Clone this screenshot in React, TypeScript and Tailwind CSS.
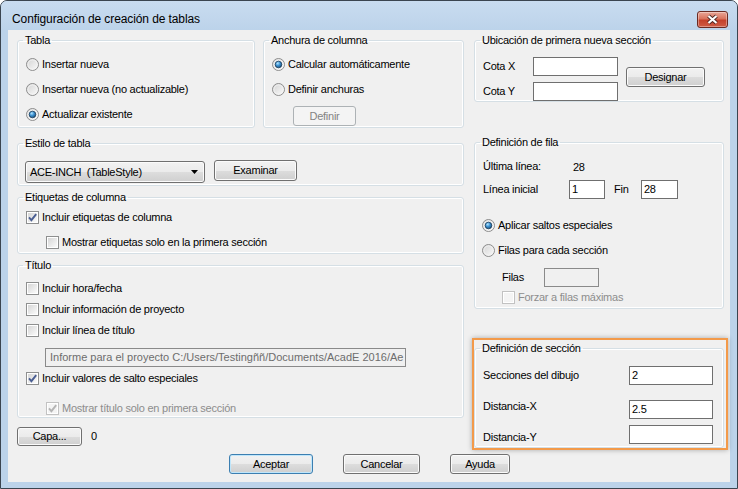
import React from "react";

type Kids = { children?: React.ReactNode; className?: string };

const GroupBox = ({ title, className = "", children }: Kids & { title: string }) => (
  <fieldset
    className={`rounded-[3px] border border-[#d5dfe5] shadow-[inset_0_0_0_1px_#ffffff] ${className}`}
  >
    <legend className="ml-[5px] px-[2px] leading-[13px]">{title}</legend>
    {children}
  </fieldset>
);

const RadioIcon = ({ checked }: { checked?: boolean }) => (
  <svg width="13" height="13" viewBox="0 0 13 13" className="shrink-0">
    <defs>
      <linearGradient id="rbg" x1="0" y1="0" x2="1" y2="1">
        <stop offset="0" stopColor="#d2d2d2" />
        <stop offset="1" stopColor="#fcfcfc" />
      </linearGradient>
      <radialGradient id="rdot" cx="0.38" cy="0.32" r="0.75">
        <stop offset="0" stopColor="#b4e6ff" />
        <stop offset="0.45" stopColor="#3f94d4" />
        <stop offset="1" stopColor="#17496f" />
      </radialGradient>
    </defs>
    <circle cx="6.5" cy="6.5" r="6" fill="url(#rbg)" stroke="#8d8d8d" />
    <circle cx="6.5" cy="6.5" r="4.6" fill="none" stroke="#f4f4f4" strokeWidth="0.8" />
    {checked && <circle cx="6.5" cy="6.5" r="3.3" fill="url(#rdot)" stroke="#1b3c5c" strokeWidth="0.8" />}
  </svg>
);

const CheckIcon = ({ checked, disabled }: { checked?: boolean; disabled?: boolean }) => (
  <svg width="13" height="13" viewBox="0 0 13 13" className="shrink-0">
    <defs>
      <linearGradient id="cbg" x1="0" y1="0" x2="1" y2="1">
        <stop offset="0" stopColor="#d6d6d6" />
        <stop offset="1" stopColor="#fbfbfb" />
      </linearGradient>
    </defs>
    <rect x="0.5" y="0.5" width="12" height="12" fill="#fff" stroke={disabled ? "#c2c2c2" : "#8e8f8f"} />
    <rect x="2" y="2" width="9" height="9" fill={disabled ? "#f4f4f4" : "url(#cbg)"} />
    {checked && (
      <path
        d="M3 6.4 L5.4 9.2 L10.2 3.2"
        fill="none"
        stroke={disabled ? "#b4b4b4" : "#4a5e92"}
        strokeWidth="1.9"
      />
    )}
  </svg>
);

const Radio = ({ label, checked, className = "" }: { label: string; checked?: boolean; className?: string }) => (
  <div className={`flex h-[13px] items-center gap-[3px] ${className}`}>
    <RadioIcon checked={checked} />
    <span className="leading-[13px]">{label}</span>
  </div>
);

const Check = ({
  label,
  checked,
  disabled,
  className = "",
}: {
  label: string;
  checked?: boolean;
  disabled?: boolean;
  className?: string;
}) => (
  <div className={`flex h-[13px] items-center gap-[3px] ${className}`}>
    <CheckIcon checked={checked} disabled={disabled} />
    <span className={`leading-[13px] ${disabled ? "text-[#8d8d8d]" : ""}`}>{label}</span>
  </div>
);

const Btn = ({
  children,
  className = "",
  def,
  disabled,
}: Kids & { def?: boolean; disabled?: boolean }) => (
  <button
    className={`flex items-center justify-center rounded-[3px] border leading-[13px] ${
      disabled
        ? "border-[#adb2b5] bg-[#f4f4f4] text-[#838383]"
        : def
        ? "border-[#3c7fb1] bg-[linear-gradient(#f2f2f2_0%,#ebebeb_50%,#dddddd_50%,#cfcfcf_100%)] shadow-[inset_0_0_0_1px_#bfe6fb]"
        : "border-[#707070] bg-[linear-gradient(#f2f2f2_0%,#ebebeb_50%,#dddddd_50%,#cfcfcf_100%)] shadow-[inset_0_0_0_1px_#fbfbfb]"
    } ${className}`}
  >
    {children}
  </button>
);

const Field = ({ value, className = "", disabled }: { value?: string; className?: string; disabled?: boolean }) => (
  <div
    className={`h-[19px] shrink-0 overflow-hidden whitespace-nowrap border pl-[2px] leading-[17px] ${
      disabled ? "border-[#8a8a8a] bg-[#f0f0f0] text-[#6d6d6d]" : "border-[#6f6f6f] bg-white"
    } ${className}`}
  >
    {value}
  </div>
);

const CloseButton = () => (
  <div className="flex h-[17px] w-[31px] items-center justify-center rounded-[3px] border border-[#6a2a22] bg-[linear-gradient(#e9a798_0%,#d9735d_45%,#c4412b_55%,#cf5c45_100%)] shadow-[inset_0_0_0_1px_rgba(255,255,255,0.35)]">
    <svg width="13" height="11" viewBox="0 0 13 11">
      <path d="M2.5 2 L10.5 9 M10.5 2 L2.5 9" stroke="#4b2420" strokeWidth="3.8" />
      <path d="M2.5 2 L10.5 9 M10.5 2 L2.5 9" stroke="#ffffff" strokeWidth="2.2" />
    </svg>
  </div>
);

export default function App() {
  return (
    <div className="h-[489px] w-[738px] font-['Liberation_Sans',Arial,sans-serif] text-[11px] tracking-[-0.25px] text-black">
      <div className="flex h-full flex-col rounded-t-[7px] border border-[#3b4550] bg-[#bcd3ea]">
        {/* title bar */}
        <div className="flex h-[29px] shrink-0 items-center justify-between rounded-t-[6px] bg-[linear-gradient(#c9dcf0,#bcd3ea)] pl-[11px] pr-[9px] pt-[7px]">
          <span className="text-[12px] leading-[15px] tracking-[-0.1px]">Configuración de creación de tablas</span>
          <CloseButton />
        </div>

        {/* client area */}
        <div className="mx-[7px] mb-[6px] flex-1 bg-[#f0f0f0] pl-[9px] pt-[4px]">
          <div className="flex gap-[10px]">
            {/* left column */}
            <div className="flex w-[447px] flex-col">
              <div className="flex gap-[8px]">
                <GroupBox title="Tabla" className="h-[94px] w-[238px]">
                  <div className="flex flex-col gap-[12px] pl-[8px] pt-[11px]">
                    <Radio label="Insertar nueva" />
                    <Radio label="Insertar nueva (no actualizable)" />
                    <Radio label="Actualizar existente" checked />
                  </div>
                </GroupBox>
                <GroupBox title="Anchura de columna" className="h-[94px] w-[201px]">
                  <div className="flex flex-col pl-[8px] pt-[11px]">
                    <Radio label="Calcular automáticamente" checked />
                    <Radio label="Definir anchuras" className="mt-[12px]" />
                    <Btn disabled className="ml-[21px] mt-[10px] h-[20px] w-[63px]">
                      Definir
                    </Btn>
                  </div>
                </GroupBox>
              </div>

              <GroupBox title="Estilo de tabla" className="mt-[9px] h-[49px]">
                <div className="flex items-start gap-[9px] pl-[7px] pt-[10px]">
                  <div className="mt-[1px] flex h-[22px] w-[180px] items-center justify-between rounded-[3px] border border-[#707070] bg-[linear-gradient(#f2f2f2_0%,#ebebeb_50%,#dddddd_50%,#cfcfcf_100%)] pl-[4px] pr-[5px] shadow-[inset_0_0_0_1px_#fbfbfb]">
                    <span className="whitespace-pre">{"ACE-INCH  (TableStyle)"}</span>
                    <svg width="8" height="5" viewBox="0 0 8 5">
                      <path d="M0 0 H7 L3.5 4 Z" fill="#000" />
                    </svg>
                  </div>
                  <Btn className="h-[21px] w-[83px]">Examinar</Btn>
                </div>
              </GroupBox>

              <GroupBox title="Etiquetas de columna" className="mt-[5px] h-[63px]">
                <div className="flex flex-col pl-[8px] pt-[7px]">
                  <Check label="Incluir etiquetas de columna" checked />
                  <Check label="Mostrar etiquetas solo en la primera sección" className="ml-[20px] mt-[12px]" />
                </div>
              </GroupBox>

              <GroupBox title="Título" className="mt-[5px] h-[159px]">
                <div className="flex flex-col pl-[8px] pt-[10px]">
                  <Check label="Incluir hora/fecha" />
                  <Check label="Incluir información de proyecto" className="mt-[8px]" />
                  <Check label="Incluir línea de título" className="mt-[8px]" />
                  <Field
                    disabled
                    value="Informe para el proyecto C:/Users/Testingññ/Documents/AcadE 2016/Ae"
                    className="ml-[19px] mt-[11px] h-[17px] w-[361px] pl-[4px] leading-[15px] tracking-[0px]"
                  />
                  <Check label="Incluir valores de salto especiales" checked className="mt-[5px]" />
                  <Check label="Mostrar título solo en primera sección" checked disabled className="ml-[20px] mt-[17px]" />
                </div>
              </GroupBox>

              <div className="mt-[9px] flex h-[19px] items-center">
                <Btn className="h-[19px] w-[65px]">Capa...</Btn>
                <span className="ml-[9px]">0</span>
              </div>
            </div>

            {/* right column */}
            <div className="flex w-[250px] flex-col">
              <GroupBox title="Ubicación de primera nueva sección" className="h-[68px]">
                <div className="flex items-start pl-[8px] pt-[10px]">
                  <div className="flex flex-col gap-[6px]">
                    <div className="flex items-center">
                      <span className="w-[50px]">Cota X</span>
                      <Field className="w-[85px]" />
                    </div>
                    <div className="flex items-center">
                      <span className="w-[50px]">Cota Y</span>
                      <Field className="w-[85px]" />
                    </div>
                  </div>
                  <Btn className="ml-[8px] mt-[10px] h-[20px] w-[79px]">Designar</Btn>
                </div>
              </GroupBox>

              <GroupBox title="Definición de fila" className="mt-[34px] h-[173px]">
                <div className="flex flex-col pl-[7px] pt-[11px]">
                  <div className="flex h-[13px] items-center pl-[1px]">
                    <span className="w-[90px]">Última línea:</span>
                    <span className="mt-[2px]">28</span>
                  </div>
                  <div className="mt-[7px] flex items-center pl-[1px]">
                    <span className="w-[86px]">Línea inicial</span>
                    <Field value="1" className="w-[36px]" />
                    <span className="ml-[9px] w-[27px]">Fin</span>
                    <Field value="28" className="w-[37px]" />
                  </div>
                  <Radio label="Aplicar saltos especiales" checked className="mt-[20px]" />
                  <Radio label="Filas para cada sección" className="mt-[12px]" />
                  <div className="ml-[20px] mt-[11px] flex items-center">
                    <span className="w-[42px]">Filas</span>
                    <Field disabled className="w-[55px]" />
                  </div>
                  <Check label="Forzar a filas máximas" disabled className="ml-[20px] mt-[4px]" />
                </div>
              </GroupBox>

              <div className="-ml-[2px] -mr-[4px] mt-[29px] border-2 border-[#f39a4a] pr-[2px] pt-[2px] shadow-[0_0_5px_rgba(0,0,0,0.3)]">
                <GroupBox title="Definición de sección" className="h-[106px]">
                  <div className="flex flex-col pl-[8px] pt-[11px]">
                    <div className="flex h-[19px] items-start">
                      <span className="mt-[1px] w-[146px]">Secciones del dibujo</span>
                      <Field value="2" className="w-[84px]" />
                    </div>
                    <div className="mt-[15px] flex h-[19px] items-start">
                      <span className="-mt-[2px] w-[146px]">Distancia-X</span>
                      <Field value="2.5" className="w-[84px]" />
                    </div>
                    <div className="mt-[6px] flex h-[19px] items-start">
                      <span className="mt-[4px] w-[146px]">Distancia-Y</span>
                      <Field className="w-[84px]" />
                    </div>
                  </div>
                </GroupBox>
              </div>
            </div>
          </div>

          {/* dialog buttons */}
          <div className="ml-[212px] mt-[4px] flex gap-[30px]">
            <Btn def className="h-[20px] w-[84px]">
              Aceptar
            </Btn>
            <Btn className="h-[20px] w-[77px]">Cancelar</Btn>
            <Btn className="h-[20px] w-[60px]">Ayuda</Btn>
          </div>
        </div>
      </div>
    </div>
  );
}
